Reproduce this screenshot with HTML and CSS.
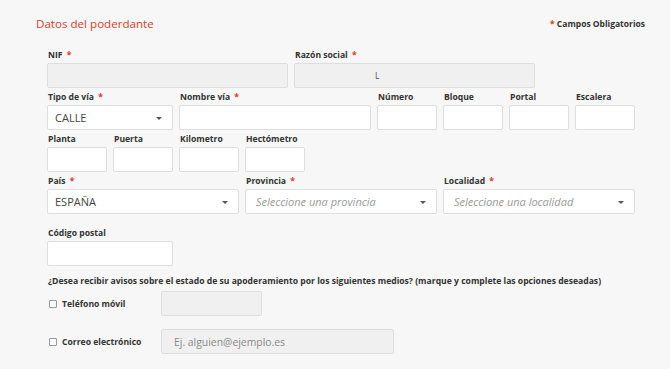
FILE: index.html
```html
<!DOCTYPE html>
<html lang="es">
<head>
    <meta charset="UTF-8">
    <meta name="viewport" content="width=device-width, initial-scale=1.0">
    <title>Datos del poderdante</title>
    <link rel="stylesheet" href="styles.css">
</head>
<body>
    <div class="page">
        <div class="header">
            <h2 class="title">Datos del poderdante</h2>
            <span class="required-note"><span class="req">*</span> Campos Obligatorios</span>
        </div>

        <!-- identificacion -->
        <div class="row-top">
            <div class="field">
                <label>NIF <span class="req">*</span></label>
                <div class="input disabled"></div>
            </div>
            <div class="field">
                <label>Razón social <span class="req">*</span></label>
                <div class="input disabled"><span class="cursor">L</span></div>
            </div>
        </div>

        <!-- direccion -->
        <div class="grid">
            <div class="field span2">
                <label>Tipo de vía <span class="req">*</span></label>
                <div class="input select">CALLE<span class="caret"></span></div>
            </div>
            <div class="field span3">
                <label>Nombre vía <span class="req">*</span></label>
                <div class="input"></div>
            </div>
            <div class="field">
                <label>Número</label>
                <div class="input"></div>
            </div>
            <div class="field">
                <label>Bloque</label>
                <div class="input"></div>
            </div>
            <div class="field">
                <label>Portal</label>
                <div class="input"></div>
            </div>
            <div class="field">
                <label>Escalera</label>
                <div class="input"></div>
            </div>

            <div class="field">
                <label>Planta</label>
                <div class="input"></div>
            </div>
            <div class="field">
                <label>Puerta</label>
                <div class="input"></div>
            </div>
            <div class="field">
                <label>Kilometro</label>
                <div class="input"></div>
            </div>
            <div class="field">
                <label>Hectómetro</label>
                <div class="input"></div>
            </div>
            <div class="field span5"></div>

            <div class="field span3">
                <label>País <span class="req">*</span></label>
                <div class="input select">ESPAÑA<span class="caret"></span></div>
            </div>
            <div class="field span3">
                <label>Provincia <span class="req">*</span></label>
                <div class="input select placeholder">Seleccione una provincia<span class="caret"></span></div>
            </div>
            <div class="field span3">
                <label>Localidad <span class="req">*</span></label>
                <div class="input select placeholder">Seleccione una localidad<span class="caret"></span></div>
            </div>
        </div>

        <div class="grid postal">
            <div class="field span2">
                <label>Código postal</label>
                <div class="input"></div>
            </div>
        </div>

        <!-- avisos -->
        <p class="question">¿Desea recibir avisos sobre el estado de su apoderamiento por los siguientes medios? (marque y complete las opciones deseadas)</p>
        <div class="notify-row">
            <span class="check"></span>
            <span class="notify-label">Teléfono móvil</span>
            <div class="input disabled phone"></div>
        </div>
        <div class="notify-row">
            <span class="check"></span>
            <span class="notify-label">Correo electrónico</span>
            <div class="input disabled email">Ej. alguien@ejemplo.es</div>
        </div>
    </div>
</body>
</html>
```

FILE: styles.css
```css
/* pagina */
body {
    margin: 0;
    background-color: #f7f7f7;
    font-family: "Open Sans", Arial, sans-serif;
    color: #333;
}

.page {
    padding: 0 25px 0 36px;
}

.header {
    display: flex;
    justify-content: space-between;
    align-items: center;
    height: 46px;
}

.title {
    margin: 0;
    font-size: 11.6px;
    font-weight: normal;
    color: #d4402a;
}

.required-note {
    font-size: 8.5px;
    font-weight: bold;
    color: #333;
}

.req {
    color: #e03a2a;
}

/* campos */
.field {
    display: flex;
    flex-direction: column;
}

label {
    height: 17px;
    line-height: 18px;
    font-size: 8.6px;
    font-weight: bold;
    padding-left: 1px;
}

label .req {
    margin-left: 2px;
}

.input {
    box-sizing: border-box;
    height: 25px;
    border: 1px solid #dedede;
    border-radius: 2px;
    background-color: #fff;
    display: flex;
    align-items: center;
    padding: 0 7px;
    font-size: 11px;
    color: #444;
    position: relative;
}

.input.disabled {
    background-color: #f0f0f0;
}

.cursor {
    margin-left: 73px;
    font-size: 8.5px;
    color: #555;
}

.select.placeholder {
    padding-left: 10px;
    font-style: italic;
    color: #999;
}

.caret {
    position: absolute;
    right: 10px;
    top: 11px;
    border-left: 3px solid transparent;
    border-right: 3px solid transparent;
    border-top: 3px solid #555;
}

.row-top {
    display: grid;
    grid-template-columns: 241px 241px;
    column-gap: 6px;
    margin-left: 11px;
}

.grid {
    display: grid;
    grid-template-columns: repeat(9, 60px);
    column-gap: 6px;
    margin-left: 11px;
}

.span2 { grid-column: span 2; }
.span3 { grid-column: span 3; }
.span5 { grid-column: span 5; }

.postal {
    margin-top: 10px;
}

/* avisos */
.question {
    margin: 10px 0 0 12px;
    font-size: 8.6px;
    font-weight: bold;
    line-height: 11px;
}

.notify-row {
    display: flex;
    align-items: center;
    margin-left: 13px;
    margin-top: 4px;
}

.notify-row + .notify-row {
    margin-top: 13px;
}

.check {
    box-sizing: border-box;
    width: 8px;
    height: 8px;
    border: 1px solid #999;
    border-radius: 1px;
    background-color: #fff;
}

.notify-label {
    width: 99px;
    margin-left: 5px;
    font-size: 8.6px;
    font-weight: bold;
}

.phone {
    width: 101px;
}

.email {
    width: 233px;
    padding-left: 12px;
    color: #888;
    font-size: 10.4px;
}
```
